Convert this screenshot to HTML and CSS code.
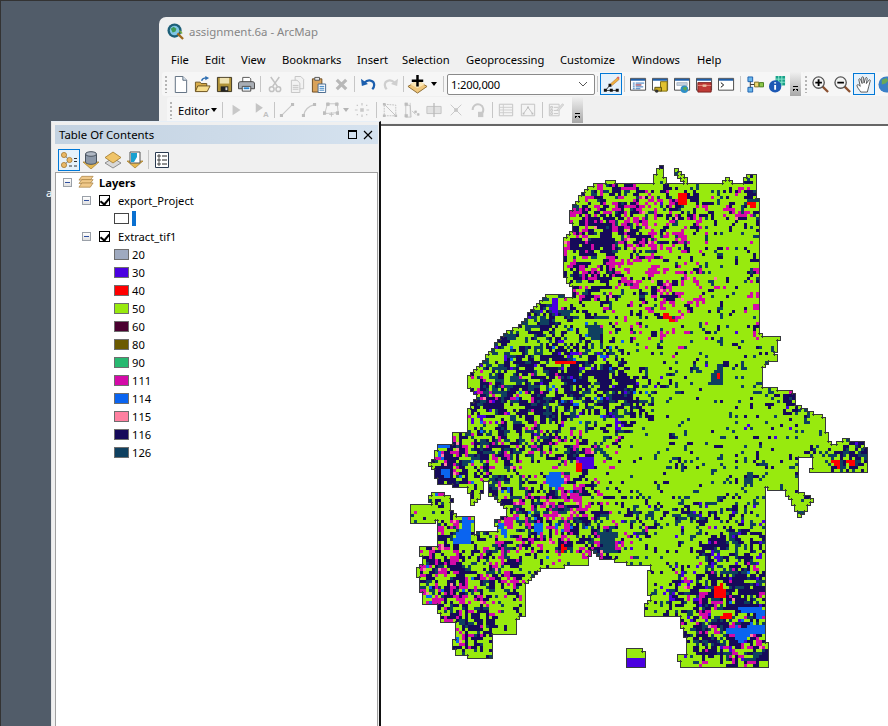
FILE: index.html
```html
<!DOCTYPE html>
<html lang="en">
<head>
<meta charset="utf-8">
<title>assignment.6a - ArcMap</title>
<link rel="stylesheet" href="styles.css">
</head>
<body>
<svg class="defs" width="0" height="0" aria-hidden="true">
  <defs>
    <symbol id="i-app" viewBox="0 0 18 18"><circle cx="8" cy="8" r="7.5" fill="#1d5f78"/><circle cx="8" cy="8" r="5" fill="#7fc6e6"/><path d="M4 6l3-2 3 2-1 3-3 1z" fill="#3f9a55"/><path d="M11 11l6 6" stroke="#a06a1c" stroke-width="2.4"/><path d="M13 8l3 3" stroke="#7ab13c" stroke-width="1.5"/></symbol>
    <symbol id="i-new" viewBox="0 0 18 18"><path d="M3.500.5h8l4 4v13h-12z" fill="#fff" stroke="#5a6a7c"/><path d="M11.500.5v4h4" fill="#dce6f0" stroke="#5a6a7c"/></symbol>
    <symbol id="i-open" viewBox="0 0 18 18"><path d="M1.500 6.500h5l1 1.500h6v8h-12z" fill="#d9ad4a" stroke="#6b5320"/><path d="M1.500 16.500l2.500-6h13l-3 6z" fill="#f6dc8a" stroke="#6b5320"/><path d="M8 5c1-2.500 3-3 5-3" fill="none" stroke="#2a6cb0" stroke-width="1.500"/><path d="M12 0l4 2.200-4 2.300z" fill="#2a6cb0"/></symbol>
    <symbol id="i-save" viewBox="0 0 18 18"><path d="M1.500 1.500h15v15h-15z" fill="#b09238" stroke="#3c3420"/><path d="M4 2h10v6H4z" fill="#efe2b2"/><path d="M5 11h8v5.500H5z" fill="#222"/><path d="M10 12h2v3h-2z" fill="#d8d8d8"/></symbol>
    <symbol id="i-print" viewBox="0 0 18 18"><path d="M5 1.500h7l1.500 1.500v4H5z" fill="#fff" stroke="#555"/><path d="M.5 8.500c0-2 1-2.500 2.500-2.500h12c1.500 0 2.500.5 2.500 2.500v5h-17z" fill="#a8adb4" stroke="#444"/><path d="M4.500 11h9v5h-9z" fill="#fff" stroke="#444"/><path d="M6 13h6" stroke="#2a86d0" stroke-width="2"/></symbol>
    <symbol id="i-cut" viewBox="0 0 18 18"><g fill="none" stroke="#c2c2c2" stroke-width="1.600"><path d="M4 1l7 10M13 1L6 11"/><circle cx="5" cy="14" r="2.500"/><circle cx="12" cy="14" r="2.500"/></g></symbol>
    <symbol id="i-copy" viewBox="0 0 18 18"><g fill="#f2f2f2" stroke="#c4c4c4"><path d="M6.500.5h6l3 3v10h-9z"/><path d="M2.500 4.500h6l3 3v10h-9z"/></g><path d="M4 10h6M4 12h6M4 14h6" stroke="#c4c4c4"/></symbol>
    <symbol id="i-paste" viewBox="0 0 18 18"><path d="M1.500 3h10v14h-10z" fill="#d9a25a" stroke="#6a4a20"/><path d="M4 1.500h5v3H4z" fill="#e8e8e8" stroke="#555"/><path d="M7.500 8.500h8v9h-8z" fill="#fff" stroke="#43668c"/><path d="M9 11h5M9 13h5M9 15h5" stroke="#2f7cc0"/></symbol>
    <symbol id="i-del" viewBox="0 0 18 18"><path d="M4 4l10 10M14 4L4 14" stroke="#b8b8b8" stroke-width="3.400"/></symbol>
    <symbol id="i-undo" viewBox="0 0 18 18"><path d="M5 7c3-3.500 10-3 10 2.500 0 2-1 3.500-2 4.500" fill="none" stroke="#1c5fae" stroke-width="2.400"/><path d="M1 3l1 7.500 6.500-2z" fill="#1c5fae"/></symbol>
    <symbol id="i-redo" viewBox="0 0 18 18"><path d="M13 7C10 3.500 3 4 3 9.500c0 2 1 3.500 2 4.500" fill="none" stroke="#cfcfcf" stroke-width="2.400"/><path d="M17 3l-1 7.500-6.500-2z" fill="#cfcfcf"/></symbol>
    <symbol id="i-add" viewBox="0 0 22 22"><path d="M11 7l10 6-10 7L1 13z" fill="#f0c77c" stroke="#8c6a30"/><path d="M11 15l8-4.500-8-4-8 4z" fill="#fbe6b4"/><path d="M11 1v12M5 7h12" stroke="#000" stroke-width="2.600"/></symbol>
    <symbol id="i-edit" viewBox="0 0 20 20"><path d="M3 17L8 11" stroke="#222"/><path d="M3 17h14" stroke="#222"/><g fill="#111"><path d="M1 15h3.500v3.500H1zM8 15h3.500v3.500H8zM15 15h3.500v3.500H15zM6.500 9H10v3.500H6.500z"/></g><path d="M9 9l8-7 2 2-8 7z" fill="#f0b040" stroke="#b06a20" stroke-width=".6"/><path d="M16 1.500l2-1 1.500 1.500-1 2z" fill="#e06060"/></symbol>
    <symbol id="i-win" viewBox="0 0 18 18"><path d="M.5 2.500h16v12.500H.5z" fill="#fff" stroke="#444"/><path d="M1 3h15v2H1z" fill="#1e5ea8"/></symbol>
    <symbol id="i-toc" viewBox="0 0 18 18"><use href="#i-win"/><path d="M3 7.500h2M6 7.500h9M3 9.500h2M6 9.500h6M3 11.500h2M6 11.500h8M3 13.500h2M6 13.500h5" stroke="#2c6eb8"/><path d="M6 9.500h6" stroke="#d84040"/></symbol>
    <symbol id="i-cat" viewBox="0 0 18 18"><use href="#i-win"/><path d="M9 6h7v10H9z" fill="#e2c230" stroke="#7a6a10"/><path d="M3 12h7v4H3z" fill="#c8a820" stroke="#5a5010"/><circle cx="5" cy="16" r="1.800" fill="#333"/></symbol>
    <symbol id="i-search" viewBox="0 0 18 18"><use href="#i-win"/><path d="M3 7h11v3H3z" fill="#c8d4e2" stroke="#8a98a8" stroke-width=".6"/><circle cx="11" cy="14" r="4" fill="#2f8fc8"/><path d="M9 13l3-2 2 2-2 3z" fill="#5ea850"/></symbol>
    <symbol id="i-tbx" viewBox="0 0 18 18"><use href="#i-win"/><path d="M2 7h14v10H2z" fill="#bf3a35" stroke="#7a2220"/><path d="M2 10h14" stroke="#e88a80"/><path d="M7 9h4v2.500H7z" fill="#e8c0a0"/></symbol>
    <symbol id="i-py" viewBox="0 0 18 18"><use href="#i-win"/><path d="M3 7l3 2.500-3 2.500" fill="none" stroke="#000"/></symbol>
    <symbol id="i-model" viewBox="0 0 18 18"><g stroke="#1c5fae"><path d="M1 1h5v5H1zM1 12h5v5H1z" fill="#6ab6ea"/></g><path d="M3.500 6v6M3.500 9h8" stroke="#333"/><path d="M8 6.500h4.500v5H8z" fill="#ecd870" stroke="#7a6a20"/><path d="M13 7h4.500v4.500H13z" fill="#8cc84a" stroke="#46781c"/></symbol>
    <symbol id="i-info" viewBox="0 0 18 18"><path d="M7 0h10v10H7z" fill="#1aa088"/><path d="M7 3.300h10M7 6.600h10M10.300 0v10M13.600 0v10" stroke="#8ce8d0"/><circle cx="6.500" cy="11" r="6.500" fill="#1c58b4"/><path d="M6.500 6.500v1.500M6.500 9.500v5" stroke="#fff" stroke-width="2"/></symbol>
    <symbol id="i-zin" viewBox="0 0 18 18"><path d="M11 11l6 6" stroke="#8a5030" stroke-width="2.400"/><circle cx="7" cy="7" r="6" fill="#f4f4f4" stroke="#555" stroke-width="1.400"/><path d="M3.500 7h7M7 3.500v7" stroke="#000" stroke-width="2"/></symbol>
    <symbol id="i-zout" viewBox="0 0 18 18"><path d="M11 11l6 6" stroke="#8a5030" stroke-width="2.400"/><circle cx="7" cy="7" r="6" fill="#f4f4f4" stroke="#555" stroke-width="1.400"/><path d="M3.500 7h7" stroke="#000" stroke-width="2"/></symbol>
    <symbol id="i-hand" viewBox="0 0 18 18"><path d="M5 17c-1-2-4-5-4-7 0-1 1.500-1 2.500 0l1 1L3 4c0-1.500 1.500-1.500 2 0l1.500 4L6 2c0-1.500 2-1.500 2 0l.5 5.500L10 2.500c.5-1.500 2-1 1.800.5L11 8l2.500-3.500c1-1 2-.3 1.500 1L13.500 11c-.5 2-1 4-1.500 6z" fill="#fff" stroke="#444" stroke-width=".9"/></symbol>
    <symbol id="i-globe" viewBox="0 0 18 18"><circle cx="9" cy="9" r="8.500" fill="#3a80c8"/><path d="M4 4l5-2 2 3-3 3-4 1zM10 10l5-1-1 6-3 1z" fill="#6aa858"/></symbol>
    <symbol id="i-arrow" viewBox="0 0 18 18"><path d="M4 3l9 6-9 6z" fill="#c8c8c8"/></symbol>
    <symbol id="i-annot" viewBox="0 0 18 18"><path d="M2 1l8 5.500-8 5.500z" fill="#c4c4c4"/><text x="10" y="17" class="annot-a">A</text></symbol>
    <symbol id="i-line" viewBox="0 0 18 18"><path d="M3 15L15 3" stroke="#c8c8c8" stroke-width="1.200"/><path d="M1 13.500h3.500V17H1zM13.500 1H17v3.500h-3.500z" fill="#bdbdbd"/></symbol>
    <symbol id="i-arc" viewBox="0 0 18 18"><path d="M3 15C4 9 8 5 15 3" fill="none" stroke="#c8c8c8" stroke-width="1.600"/><path d="M1 13.500h3.500V17H1zM13.500 1H17v3.500h-3.500z" fill="#bdbdbd"/></symbol>
    <symbol id="i-poly" viewBox="0 0 18 18"><path d="M5 2h11l1 10-15 1z" fill="none" stroke="#c4c4c4"/><path d="M4 1h3v3H4zM14 1h3v3h-3zM15 11h3v3h-3zM0 11h3v3H0zM7 14h5M9.500 11.500v5" fill="#bdbdbd" stroke="#bdbdbd"/></symbol>
    <symbol id="i-expl" viewBox="0 0 18 18"><g fill="#c8c8c8"><path d="M7 7h4v4H7zM8.300 1h1.400v3H8.300zM8.300 14h1.400v3H8.300zM1 8.300h3v1.400H1zM14 8.300h3v1.400h-3zM3 3h1.500v1.500H3zM13.500 3H15v1.500h-1.500zM3 13.500h1.500V15H3zM13.500 13.500H15V15h-1.500z"/></g></symbol>
    <symbol id="i-trace" viewBox="0 0 18 18"><path d="M2.500 2.500l13 1v12h-13z" fill="none" stroke="#bdbdbd" stroke-dasharray="2 1"/><path d="M2 2l14 14" stroke="#bdbdbd"/><path d="M1 1h3v3H1zM14 14h3v3h-3zM1 14h3v3H1z" fill="#bdbdbd"/></symbol>
    <symbol id="i-split" viewBox="0 0 18 18"><path d="M2 3l5 1 1 13H2zM9 10l4 4" fill="none" stroke="#c4c4c4"/><path d="M1 1h3v3H1zM1 14h3v3H1zM12 10h2v2h-2zM15 13h2v2h-2zM7 1v16" fill="#bdbdbd" stroke="#bdbdbd" stroke-width=".7"/></symbol>
    <symbol id="i-div" viewBox="0 0 18 18"><path d="M1 5h16v8H1z" fill="#e2e2e2" stroke="#c0c0c0"/><path d="M9 1v16" stroke="#b8b8b8" stroke-width="1.400"/></symbol>
    <symbol id="i-x" viewBox="0 0 18 18"><path d="M3 15L15 3M3 3l12 12" stroke="#c6c6c6"/><path d="M7 7h4v4H7z" fill="#c6c6c6"/></symbol>
    <symbol id="i-rot" viewBox="0 0 18 18"><path d="M3 9a6 6 0 1 1 10 4" fill="none" stroke="#c8c8c8" stroke-width="2.200"/><path d="M9 11h6v6H9z" fill="#c8c8c8"/></symbol>
    <symbol id="i-tab" viewBox="0 0 18 18"><path d="M1.500 2.500h15v13h-15z" fill="#f4f4f4" stroke="#c0c0c0"/><path d="M2 6h14M2 9h14M2 12h14M6 3v12" stroke="#cccccc"/></symbol>
    <symbol id="i-sk" viewBox="0 0 18 18"><path d="M1.500 2.500h15v13h-15z" fill="#f4f4f4" stroke="#c0c0c0"/><path d="M4 13l5-7 5 7" fill="none" stroke="#bcbcbc"/><path d="M3 12h2v2H3zM8 5h2v2H8zM13 12h2v2h-2z" fill="#bcbcbc"/></symbol>
    <symbol id="i-prop" viewBox="0 0 18 18"><path d="M1.500 2.500h11v13h-11z" fill="#f4f4f4" stroke="#c4c4c4"/><path d="M3 5h2v2H3zM3 8.500h2v2H3zM3 12h2v2H3zM6.500 6h5M6.500 9.500h5M6.500 13h5" stroke="#c4c4c4" fill="none"/><path d="M10 9l6-7 2 1-6 7z" fill="#dcdcdc" stroke="#c4c4c4" stroke-width=".6"/></symbol>
    <symbol id="i-list" viewBox="0 0 18 18"><circle cx="4" cy="4" r="2.600" fill="#e8b868" stroke="#a07020" stroke-width=".7"/><circle cx="4" cy="14" r="2.600" fill="#e8b868" stroke="#a07020" stroke-width=".7"/><circle cx="9.500" cy="9" r="2.600" fill="#e8b868" stroke="#a07020" stroke-width=".7"/><path d="M6 5.500l1.500 2M6 12.500l1.500-2" stroke="#777"/><path d="M14 7.500h3M14 10.500h3M9 15h3M14 15h3" stroke="#333"/></symbol>
    <symbol id="i-src" viewBox="0 0 18 18"><path d="M1 11h16l-8 7z" fill="#e6b850" stroke="#a07828" stroke-width=".7"/><path d="M3.500 3v8c0 1.300 2.500 2.300 5.500 2.300s5.500-1 5.500-2.300V3" fill="#8c98a8" stroke="#4a5460"/><ellipse cx="9" cy="3" rx="5.500" ry="2.300" fill="#b0b8c4" stroke="#4a5460"/></symbol>
    <symbol id="i-vis" viewBox="0 0 18 18"><path d="M9 7l8 5-8 5-8-5z" fill="#d8d8d8" stroke="#777" stroke-width=".8"/><path d="M9 1l8 5.500-8 5.500-8-5.500z" fill="#f0c468" stroke="#a07828" stroke-width=".8"/></symbol>
    <symbol id="i-sel" viewBox="0 0 18 18"><path d="M1 10l8 7 8-7z" fill="#e6b850" stroke="#a07828" stroke-width=".7"/><path d="M4 1h10v11H4z" fill="#fff" stroke="#555"/><path d="M5 2h6v4l-3 5H5z" fill="#18a0d0"/></symbol>
    <symbol id="i-opt" viewBox="0 0 18 18"><path d="M2.500 1.500h13v15h-13z" fill="#fff" stroke="#2a3a50"/><path d="M5 4h2v2H5zM5 8h2v2H5zM5 12h2v2H5z" fill="#fff" stroke="#222" stroke-width=".8"/><path d="M9 5h5M9 9h5M9 13h5" stroke="#222"/></symbol>
    <symbol id="i-layers" viewBox="0 0 18 14"><g fill="#f0c98a" stroke="#a07838" stroke-width=".7"><path d="M4 1h12l-3 4H1z"/><path d="M4 4.500h12l-3 4H1z"/><path d="M4 8h12l-3 4.500H1z"/></g></symbol>
  </defs>
</svg>

<span class="desk-label">a</span>

<section class="arcmap">
  <header class="titlebar">
    <svg class="app-icon"><use href="#i-app"/></svg>
    <span class="title-text">assignment.6a - ArcMap</span>
  </header>
  <nav class="menubar">
    <span class="m-file">File</span><span class="m-edit">Edit</span><span class="m-view">View</span><span class="m-book">Bookmarks</span><span class="m-ins">Insert</span><span class="m-sel">Selection</span><span class="m-geo">Geoprocessing</span><span class="m-cus">Customize</span><span class="m-win">Windows</span><span>Help</span>
  </nav>
  <div class="toolrow">
    <div class="toolbar tb-main">
      <i class="grip"></i>
      <b class="btn"><svg><use href="#i-new"/></svg></b>
      <b class="btn"><svg><use href="#i-open"/></svg></b>
      <b class="btn"><svg><use href="#i-save"/></svg></b>
      <b class="btn"><svg><use href="#i-print"/></svg></b>
      <i class="sep sep-wide"></i>
      <b class="btn"><svg><use href="#i-cut"/></svg></b>
      <b class="btn"><svg><use href="#i-copy"/></svg></b>
      <b class="btn"><svg><use href="#i-paste"/></svg></b>
      <b class="btn"><svg><use href="#i-del"/></svg></b>
      <i class="sep"></i>
      <b class="btn"><svg><use href="#i-undo"/></svg></b>
      <b class="btn"><svg><use href="#i-redo"/></svg></b>
      <i class="sep"></i>
      <b class="btn"><svg class="big"><use href="#i-add"/></svg></b>
      <i class="caret"></i>
      <i class="sep sep-add"></i>
      <div class="scale"><span>1:200,000</span>
        <svg class="chev" viewBox="0 0 10 6"><path d="M1 1l4 4 4-4" fill="none" stroke="#555"/></svg>
      </div>
      <i class="sep"></i>
      <b class="btn active"><svg><use href="#i-edit"/></svg></b>
      <i class="sep"></i>
      <b class="btn"><svg><use href="#i-toc"/></svg></b>
      <b class="btn"><svg><use href="#i-cat"/></svg></b>
      <b class="btn"><svg><use href="#i-search"/></svg></b>
      <b class="btn"><svg><use href="#i-tbx"/></svg></b>
      <b class="btn"><svg><use href="#i-py"/></svg></b>
      <i class="sep sep-wide"></i>
      <b class="btn"><svg><use href="#i-model"/></svg></b>
      <b class="btn"><svg><use href="#i-info"/></svg></b>
      <i class="more"></i>
    </div>
    <div class="toolbar tb-nav">
      <i class="grip"></i>
      <b class="btn"><svg><use href="#i-zin"/></svg></b>
      <b class="btn"><svg><use href="#i-zout"/></svg></b>
      <b class="btn active"><svg><use href="#i-hand"/></svg></b>
      <b class="btn"><svg><use href="#i-globe"/></svg></b>
    </div>
  </div>
  <div class="toolrow row-two">
    <div class="toolbar tb-edit">
      <i class="grip"></i>
      <span class="editor">Editor</span><i class="caret caret-ed"></i>
      <i class="sep sep-e1"></i>
      <b class="btn"><svg><use href="#i-arrow"/></svg></b>
      <b class="btn btn-annot"><svg><use href="#i-annot"/></svg></b>
      <i class="sep sep-e2"></i>
      <b class="btn"><svg><use href="#i-line"/></svg></b>
      <b class="btn"><svg><use href="#i-arc"/></svg></b>
      <b class="btn"><svg><use href="#i-poly"/></svg></b>
      <i class="caret caret-off"></i>
      <b class="btn"><svg><use href="#i-expl"/></svg></b>
      <i class="sep"></i>
      <b class="btn"><svg><use href="#i-trace"/></svg></b>
      <b class="btn"><svg><use href="#i-split"/></svg></b>
      <b class="btn"><svg><use href="#i-div"/></svg></b>
      <b class="btn"><svg><use href="#i-x"/></svg></b>
      <b class="btn"><svg><use href="#i-rot"/></svg></b>
      <i class="sep"></i>
      <b class="btn"><svg><use href="#i-tab"/></svg></b>
      <b class="btn"><svg><use href="#i-sk"/></svg></b>
      <i class="sep"></i>
      <b class="btn"><svg><use href="#i-prop"/></svg></b>
      <i class="more more-ed"></i>
    </div>
  </div>
  <main class="mapview"><canvas id="map" width="729" height="600"></canvas></main>
</section>

<aside class="toc">
  <header class="toc-title">
    <span>Table Of Contents</span>
    <i class="win-max"></i>
    <svg class="win-close" viewBox="0 0 10 10"><path d="M1 1l8 8M9 1l-8 8" stroke="#000" stroke-width="1.200"/></svg>
  </header>
  <div class="toc-tools">
    <b class="btn active"><svg><use href="#i-list"/></svg></b>
    <b class="btn"><svg><use href="#i-src"/></svg></b>
    <b class="btn"><svg><use href="#i-vis"/></svg></b>
    <b class="btn"><svg><use href="#i-sel"/></svg></b>
    <i class="sep"></i>
    <b class="btn"><svg><use href="#i-opt"/></svg></b>
  </div>
  <div class="tree">
    <div class="row lvl0"><i class="exp"></i><svg class="lay"><use href="#i-layers"/></svg><strong>Layers</strong></div>
    <div class="row lvl1"><i class="exp"></i><i class="chk"></i><span class="lname">export_Project</span></div>
    <div class="row lvl2"><i class="swatch sw-none"></i><i class="bluebar"></i></div>
    <div class="row lvl1"><i class="exp"></i><i class="chk"></i><span class="lname">Extract_tif1</span></div>
    <div class="row lvl2"><i class="swatch c20"></i><span>20</span></div>
    <div class="row lvl2"><i class="swatch c30"></i><span>30</span></div>
    <div class="row lvl2"><i class="swatch c40"></i><span>40</span></div>
    <div class="row lvl2"><i class="swatch c50"></i><span>50</span></div>
    <div class="row lvl2"><i class="swatch c60"></i><span>60</span></div>
    <div class="row lvl2"><i class="swatch c80"></i><span>80</span></div>
    <div class="row lvl2"><i class="swatch c90"></i><span>90</span></div>
    <div class="row lvl2"><i class="swatch c111"></i><span>111</span></div>
    <div class="row lvl2"><i class="swatch c114"></i><span>114</span></div>
    <div class="row lvl2"><i class="swatch c115"></i><span>115</span></div>
    <div class="row lvl2"><i class="swatch c116"></i><span>116</span></div>
    <div class="row lvl2"><i class="swatch c126"></i><span>126</span></div>
  </div>
</aside>
<script src="map.js"></script>
</body>
</html>
```
FILE: styles.css
```css
* { box-sizing: border-box; }
html, body { height: 100%; }
body {
  margin: 0;
  position: relative;
  overflow: hidden;
  background: #515c69;
  border-top: 1px solid #333;
  border-left: 1px solid #333;
  font: 11.2px "Noto Sans", "Open Sans", sans-serif;
  color: #000;
}
.defs { position: absolute; }
.annot-a { font: bold 9px "Liberation Sans", sans-serif; fill: #c0c0c0; }
i, b { display: block; font-style: normal; flex: none; }

.desk-label { position: absolute; left: 45px; top: 184px; color: #fff; }

.arcmap {
  position: absolute;
  left: 158px; top: 16px; right: 0; bottom: 0;
  display: flex;
  flex-direction: column;
  background: #f0f0f0;
  border-radius: 7px 0 0 0;
}
.titlebar { height: 28px; display: flex; align-items: center; padding-left: 8px; gap: 5px; flex: none; }
.app-icon { width: 17px; height: 17px; }
.title-text { color: #868686; font-size: 11.4px; }
.menubar { height: 27px; display: flex; align-items: center; padding: 2px 0 0 12px; flex: none; }
.menubar span { white-space: nowrap; }
.m-file { width: 34px; } .m-edit { width: 36px; } .m-view { width: 41px; } .m-book { width: 75px; }
.m-ins { width: 45px; } .m-sel { width: 64px; } .m-geo { width: 94px; } .m-cus { width: 72px; } .m-win { width: 65px; }

.toolrow { display: flex; height: 25px; padding-left: 3px; flex: none; }
.row-two { padding-left: 8px; height: 27px; }
.toolbar { display: flex; align-items: center; background: #f6f6f6; border-radius: 3px 0 0 3px; height: 24px; }
.tb-main { width: 641px; padding-left: 3px; }
.tb-nav { flex: 1; padding-left: 2px; min-width: 0; overflow: hidden; }
.tb-edit { width: 416px; height: 26px; padding-left: 3px; position: relative; }
.grip { width: 2px; height: 17px; margin-right: 2px; background: repeating-linear-gradient(#b4b4b4 0 2px, transparent 2px 4px); }
.btn { width: 22px; height: 22px; display: flex; align-items: center; justify-content: center; }
.btn svg { width: 17px; height: 17px; }
.btn svg.big { width: 21px; height: 21px; }
.btn.active { background: #e5f1fb; border: 1px solid #0078d7; }
.sep { width: 1px; height: 16px; margin: 0 2px; background: #c6c6c6; }
.sep-wide { margin: 0 3px; }
.sep-add { margin-left: 6px; }
.caret { width: 0; height: 0; margin-left: 3px; border: 3.500px solid transparent; border-top: 4px solid #000; border-bottom: 0; }
.caret-ed { margin-left: 2px; }
.caret-off { border-top-color: #b4b4b4; margin: 0 2px 0 1px; }
.scale {
  width: 148px; height: 21px; margin-left: 1px; padding: 0 4px 0 3px;
  display: flex; align-items: center; justify-content: space-between;
  background: #fff; border: 1px solid #8a8a8a; border-radius: 2px; letter-spacing: -.2px;
}
.chev { width: 10px; height: 6px; margin-right: 2px; }
.more {
  width: 11px; height: 24px; margin-left: 2px; align-self: flex-start; position: relative;
  background: linear-gradient(#f0f0f0, #a8a8a8);
}
.more::after {
  content: ""; position: absolute; left: 3px; bottom: 3px; width: 5px; height: 6px;
  border-top: 1px solid #000;
  background: linear-gradient(135deg, #000 0 50%, transparent 50%) 0 2px / 2.500px 3px no-repeat,
              linear-gradient(225deg, #000 0 50%, transparent 50%) 2.500px 2px / 2.500px 3px no-repeat;
}
.more-ed { position: absolute; right: 0; top: 0; height: 26px; margin: 0; }
.tb-edit .btn svg { width: 16px; height: 16px; }
.editor { margin-left: 4px; }
.tb-edit .sep { margin: 0 2px 0 3px; }
.tb-edit .sep-e1 { margin: 0 3px 0 5px; }
.tb-edit .sep-e2 { margin: 0 1px; }
.btn-annot { margin-left: 3px; }

.mapview {
  flex: 1; min-height: 0; position: relative;
  background: #fff; border-top: 2px solid #666;
}
#map { position: absolute; left: 0; top: 0; }

.toc {
  position: absolute;
  left: 50px; top: 120px; bottom: -1px; width: 330px;
  display: flex; flex-direction: column;
  background: #f0f0f0;
  border-top: 1px solid #e6eef6;
  border-left: 1px solid #e6e6e6;
  border-right: 2px solid #111;
  padding: 3px 0 0 3px;
}
.toc-title {
  height: 19px; margin-right: 1px; flex: none;
  display: flex; align-items: center; padding-left: 4px;
  background: linear-gradient(90deg, #c3d2e1, #d5e2ef);
  font-size: 11.4px;
}
.toc-title span { flex: 1; }
.win-max { width: 9px; height: 9px; border: 1px solid #000; border-top-width: 2px; margin-right: 6px; }
.win-close { width: 10px; height: 10px; margin-right: 5px; }
.toc-tools { height: 28px; display: flex; align-items: center; padding: 3px 0 0 3px; flex: none; }
.toc-tools .btn svg { width: 18px; height: 18px; }
.toc-tools .sep { margin: 0 2px; height: 19px; }
.tree { flex: 1; margin-right: 1px; background: #fff; border: 1px solid #a0a0a0; }
.row { height: 18px; display: flex; align-items: center; white-space: nowrap; }
.lvl0 { padding-left: 7px; }
.lvl1 { padding-left: 26px; }
.lvl2 { padding-left: 58px; }
.exp {
  width: 9px; height: 9px; border: 1px solid #9aa0a8;
  background: linear-gradient(#fff, #e0e0e0); position: relative;
}
.exp::after { content: ""; position: absolute; left: 1px; top: 3px; width: 5px; height: 1px; background: #3050a0; }
.lay { width: 17px; height: 14px; margin: 0 4px 0 6px; }
.lvl0 strong { font-weight: 700; }
.chk { width: 11px; height: 11px; margin-left: 8px; border: 1px solid #000; position: relative; }
.chk::after {
  content: ""; position: absolute; left: 2px; top: 0; width: 4px; height: 7px;
  border: solid #000; border-width: 0 2px 2px 0; transform: rotate(40deg);
}
.lname { margin-left: 8px; }
.swatch { width: 15px; height: 11px; margin-right: 3px; border: 1px solid #6e6e6e; }
.sw-none { background: #fff; border-color: #444; }
.bluebar { width: 4px; height: 15px; background: #0a70d0; }
.c20 { background: #9faac0; } .c30 { background: #4a00e0; } .c40 { background: #ff0000; }
.c50 { background: #98ea0e; } .c60 { background: #4a0030; } .c80 { background: #6b5a00; }
.c90 { background: #28b870; } .c111 { background: #d40aa8; } .c114 { background: #0a64f0; }
.c115 { background: #ff80a0; } .c116 { background: #160a5a; } .c126 { background: #0f4060; }
```
FILE: map.js
```js
(function () {
  var OX = 159, OY = 125, CELL = 3;
  var GREEN = '#98ea0e', DARK = '#160a5a', TEAL = '#0f4060', MAG = '#d40aa8',
      BLUE = '#0a64f0', PUR = '#4a00e0', RED = '#ff0000', PINK = '#ff80a0';

  var OUTLINE = [[592,185],[600,183],[615,180],[618,183],[653,184],[657,170],[662,166],[665,180],[667,184],[685,184],[672,167],[676,166],[687,177],[688,183],[722,183],[727,178],[732,180],[733,183],[742,183],[746,175],[757,173],[758,220],[759,260],[759,327],[762,337],[779,337],[777,350],[775,353],[777,360],[768,360],[762,367],[763,387],[793,390],[795,403],[807,410],[825,417],[827,438],[832,445],[843,439],[862,441],[866,447],[867,470],[808,470],[813,468],[813,456],[798,456],[798,490],[813,499],[800,517],[792,502],[785,490],[765,487],[764,530],[765,567],[767,665],[680,666],[679,655],[688,653],[687,638],[682,627],[682,614],[645,615],[645,607],[650,598],[648,587],[650,565],[630,565],[625,561],[600,557],[590,548],[589,563],[572,565],[543,567],[526,582],[525,615],[517,617],[517,633],[491,633],[493,658],[475,657],[457,653],[452,643],[457,637],[457,620],[440,620],[439,604],[422,604],[421,578],[417,577],[417,568],[422,565],[421,545],[438,545],[437,520],[432,521],[410,521],[410,504],[432,504],[427,495],[437,491],[452,497],[450,508],[458,517],[475,517],[473,533],[489,530],[497,530],[496,519],[506,515],[506,507],[497,497],[488,495],[488,480],[483,480],[483,490],[473,505],[468,487],[437,482],[436,470],[428,462],[436,458],[437,443],[453,443],[454,432],[469,432],[469,408],[478,395],[468,387],[468,377],[478,368],[490,352],[502,335],[522,323],[535,305],[547,295],[560,294],[568,298],[573,295],[573,288],[563,272],[563,240],[573,228],[569,212],[580,197]];
  var ISLAND = [[628,647],[642,647],[646,655],[646,667],[628,667]];

  // cx, cy, rx, ry, dark, teal, magenta, blue, purple
  var ZONES = [
    [590,225,32,48,.62,.16,.24,.005,0],[620,215,32,36,.52,.12,.28,.01,0],[650,250,34,54,.2,.03,.34,0,0],
    [668,198,28,18,.34,.12,.09,0,0],[672,290,26,26,.12,.01,.36,0,0],[585,275,22,22,.52,.12,.24,.01,0],
    [510,372,32,42,.3,.46,.005,.005,.05],[568,375,36,32,.62,.3,.02,.08,.12],[610,395,27,27,.62,.34,.01,.03,.12],
    [530,412,32,32,.42,.36,.06,.01,.02],[482,395,15,15,.55,.32,.14,.03,.12],[540,318,22,20,.25,.5,0,0,.06],
    [450,468,16,26,.66,.18,.26,.1,0],[470,440,26,15,.38,.24,.14,.02,0],[450,570,26,42,.6,.14,.32,.05,0],
    [465,610,22,32,.6,.2,.18,.02,0],[500,560,22,32,.36,.3,.2,.02,0],[520,510,32,30,.48,.3,.25,.04,0],
    [560,510,32,30,.4,.2,.3,.03,0],[570,450,27,16,.36,.24,.16,.01,.03],[490,450,32,22,.48,.34,.16,.01,0],
    [600,540,20,20,.32,.34,.2,.01,.01],[640,520,27,27,.14,.15,.005,0,.02],
    [745,640,26,26,.66,.24,.18,.05,.05],[710,625,27,27,.56,.2,.22,0,.03],[725,590,42,22,.66,.3,.11,.02,.08],
    [730,540,32,27,.36,.3,.01,.01,.12],[700,510,52,15,.14,.2,0,0,.02],
    [750,200,13,20,.32,.2,.14,0,0],[756,275,8,32,.14,.04,.2,0,0],[850,455,22,16,.5,.58,.01,0,.05],
    [792,400,16,12,.32,.14,.05,0,0],[720,205,20,18,.22,.08,.03,0,0]
  ];

  var FEATURES = [
    [BLUE,[[462,517],[474,518],[470,530],[472,543],[454,543],[455,533],[462,528]]],
    [BLUE,[[550,470],[562,473],[563,482],[556,488],[548,484],[546,476]]],
    [BLUE,[[532,522],[543,522],[543,532],[536,533]]],
    [BLUE,[[437,443],[453,443],[450,448],[437,448]]],
    [BLUE,[[441,468],[450,467],[450,476],[443,476]]],
    [BLUE,[[498,523],[503,523],[507,532],[506,536],[500,530]]],
    [BLUE,[[735,606],[763,605],[764,615],[755,620],[755,612],[742,611]]],
    [BLUE,[[726,628],[748,626],[752,622],[764,625],[764,632],[750,634],[745,641],[738,641],[734,634],[726,634]]],
    [PUR,[[576,455],[595,455],[594,467],[580,468]]],
    [PUR,[[551,298],[558,298],[557,315],[551,312]]],
    [TEAL,[[604,530],[617,532],[614,545],[618,553],[602,552]]],
    [TEAL,[[589,324],[600,323],[603,332],[598,340],[590,338],[587,332]]],
    [TEAL,[[712,375],[718,364],[722,364],[724,385],[710,385]]],
    [TEAL,[[741,490],[748,470],[755,470],[752,481]]],
    [RED,[[677,193],[688,192],[688,204],[680,206]]],
    [RED,[[746,201],[757,201],[757,206],[746,205]]],
    [RED,[[663,311],[669,311],[673,318],[674,320],[664,319]]],
    [RED,[[832,458],[841,458],[841,467],[833,466]]],
    [RED,[[847,459],[856,460],[855,465],[848,465]]],
    [RED,[[714,585],[722,583],[727,592],[724,597],[713,596]]],
    [RED,[[716,372],[720,372],[721,378],[717,378]]],
    [RED,[[724,613],[731,613],[731,617],[720,617]]],
    [RED,[[559,546],[564,541],[567,548],[562,552]]],
    [RED,[[577,462],[582,462],[581,472],[576,470]]],
    [RED,[[556,361],[575,361],[575,364],[556,364]]]
  ];

  var s = 12345;
  function rand() {
    s = (s + 0x6D2B79F5) | 0;
    var t = Math.imul(s ^ (s >>> 15), 1 | s);
    t = (t + Math.imul(t ^ (t >>> 7), 61 | t)) ^ t;
    return ((t ^ (t >>> 14)) >>> 0) / 4294967296;
  }
  function hash(x, y, k) {
    var h = Math.imul(x, 374761393) + Math.imul(y, 668265263) + Math.imul(k, 2147483647) | 0;
    h = Math.imul(h ^ (h >>> 13), 1274126177);
    return ((h ^ (h >>> 16)) >>> 0) / 4294967296;
  }
  function noise(x, y, k) {
    var xi = Math.floor(x), yi = Math.floor(y), fx = x - xi, fy = y - yi;
    fx = fx * fx * (3 - 2 * fx); fy = fy * fy * (3 - 2 * fy);
    var a = hash(xi, yi, k), b = hash(xi + 1, yi, k), c = hash(xi, yi + 1, k), d = hash(xi + 1, yi + 1, k);
    return (a + (b - a) * fx) * (1 - fy) + (c + (d - c) * fx) * fy;
  }
  function field(x, y) {
    var r = [.025, .03, 0, 0, .002];
    ZONES.forEach(function (z) {
      var dx = (x - z[0]) / z[2], dy = (y - z[1]) / z[3];
      var f = Math.exp(-.75 * (dx * dx + dy * dy));
      for (var i = 0; i < 5; i++) r[i] = Math.max(r[i], z[4 + i] * f);
    });
    return r;
  }
  var TABLE = [[0,.05],[.02,.19],[.05,.25],[.1,.3],[.3,.42],[.5,.5],[.7,.58]];
  function thr(p) {
    for (var i = 1; i < TABLE.length; i++) {
      if (p <= TABLE[i][0]) {
        var a = TABLE[i - 1], b = TABLE[i];
        return a[1] + (b[1] - a[1]) * (p - a[0]) / (b[0] - a[0]);
      }
    }
    return .6;
  }
  function test(x, y, k, p) {
    var r = rand();
    if (p <= .001) return false;
    return .65 * noise(x / 5, y / 5, k) + .35 * r < thr(p);
  }
  function inside(pts, x, y) {
    var hit = false;
    for (var i = 0, j = pts.length - 1; i < pts.length; j = i++) {
      var a = pts[i], b = pts[j];
      if ((a[1] > y) !== (b[1] > y) && x < (b[0] - a[0]) * (y - a[1]) / (b[1] - a[1]) + a[0]) hit = !hit;
    }
    return hit;
  }

  var c = document.getElementById('map').getContext('2d');
  var X0 = 408, Y0 = 165, cols = 155, rows = 170;
  var mask = [];
  var row, col;
  for (row = 0; row < rows; row++) {
    mask[row] = [];
    for (col = 0; col < cols; col++) {
      var cx = X0 + col * CELL + 1.5, cy = Y0 + row * CELL + 1.5;
      mask[row][col] = inside(OUTLINE, cx, cy) || inside(ISLAND, cx, cy);
    }
  }
  for (row = 0; row < rows; row++) {
    for (col = 0; col < cols; col++) {
      if (!mask[row][col]) continue;
      var x = X0 + col * CELL, y = Y0 + row * CELL, mx = x + 1.5, my = y + 1.5;
      var paint = GREEN, p = field(x, y);
      if (test(x, y, 1, p[2])) paint = rand() < .05 ? PINK : MAG;
      else if (test(x, y, 2, p[0])) paint = DARK;
      else if (test(x, y, 3, p[1])) paint = TEAL;
      else if (test(x, y, 4, p[4])) paint = PUR;
      else if (test(x, y, 5, p[3])) paint = BLUE;
      for (var f = 0; f < FEATURES.length; f++) {
        if (inside(FEATURES[f][1], mx, my)) paint = FEATURES[f][0];
      }
      if (inside(ISLAND, mx, my)) paint = y >= 656 ? PUR : GREEN;
      c.fillStyle = paint;
      c.fillRect(x - OX, y - OY, CELL, CELL);
    }
  }
  c.fillStyle = '#37393c';
  for (row = 0; row < rows; row++) {
    for (col = 0; col < cols; col++) {
      if (!mask[row][col]) continue;
      var ex = X0 + col * CELL - OX, ey = Y0 + row * CELL - OY;
      if (!row || !mask[row - 1][col]) c.fillRect(ex - 1, ey - 1, CELL + 2, 1);
      if (row === rows - 1 || !mask[row + 1][col]) c.fillRect(ex - 1, ey + CELL, CELL + 2, 1);
      if (!col || !mask[row][col - 1]) c.fillRect(ex - 1, ey - 1, 1, CELL + 2);
      if (col === cols - 1 || !mask[row][col + 1]) c.fillRect(ex + CELL, ey - 1, 1, CELL + 2);
    }
  }
})();
```
